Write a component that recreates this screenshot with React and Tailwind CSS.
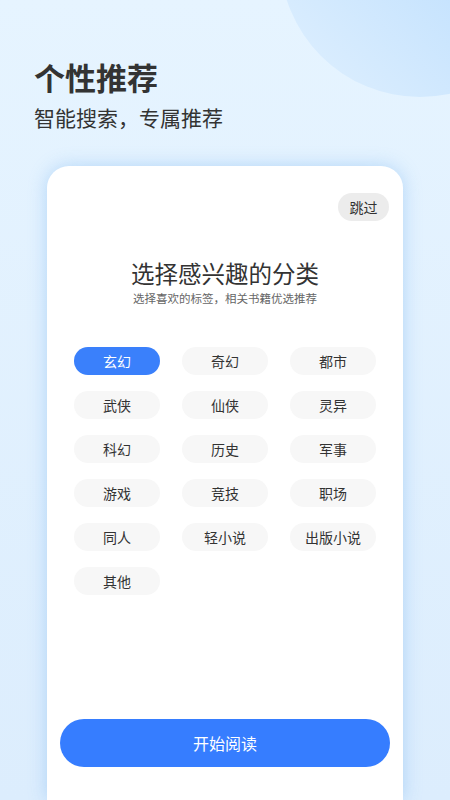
import React, { useState } from 'react';

// Interest picker onboarding screen
const CATEGORIES = [
  '玄幻', '奇幻', '都市',
  '武侠', '仙侠', '灵异',
  '科幻', '历史', '军事',
  '游戏', '竞技', '职场',
  '同人', '轻小说', '出版小说',
  '其他',
];

const FONT = "font-['Noto_Sans_CJK_SC','Noto_Sans',sans-serif]";

function Chip({ label, active, onClick }) {
  return (
    <button
      onClick={onClick}
      className={
        active
          ? 'h-[28px] rounded-full bg-[#3a80fb] text-white text-[14px] leading-[28px]'
          : 'h-[28px] rounded-full bg-[#f7f7f7] text-[#333333] text-[14px] leading-[28px]'
      }
    >
      {label}
    </button>
  );
}

export default function App() {
  const [selected, setSelected] = useState(['玄幻']);

  const toggle = (name) => {
    setSelected((prev) =>
      prev.includes(name) ? prev.filter((n) => n !== name) : [...prev, name]
    );
  };

  return (
    <div className={`relative w-[450px] h-[800px] overflow-hidden bg-gradient-to-b from-[#e6f4ff] to-[#dcedfd] flex flex-col ${FONT}`}>
      {/* decorative circle top-right */}
      <div className="absolute left-[280px] top-[-183px] w-[280px] h-[280px] rounded-full bg-gradient-to-tr from-[#e0f0fe] to-[#acd6fd]" />

      {/* header */}
      <div className="relative px-[34px] pt-[61px]">
        <h1 className="text-[31px] leading-[31px] font-bold text-[#333333]">个性推荐</h1>
        <p className="mt-[14px] text-[21px] leading-[22px] text-[#333333]">智能搜索，专属推荐</p>
      </div>

      {/* card */}
      <div className="relative mt-[38px] mx-[47px] flex-1 bg-white rounded-t-[22px] shadow-[0_0_18px_rgba(120,180,240,0.45)] flex flex-col">
        <div className="flex justify-end pt-[27px] pr-[14px]">
          <button className="h-[28px] w-[51px] rounded-full bg-[#ececec] text-[14px] leading-[28px] text-[#333333]">
            跳过
          </button>
        </div>

        <h2 className="mt-[40px] text-center text-[23.5px] leading-[24px] text-[#333333]">选择感兴趣的分类</h2>
        <p className="mt-[7px] text-center text-[11.5px] leading-[12px] text-[#666666]">选择喜欢的标签，相关书籍优选推荐</p>

        <div className="mt-[43px] px-[27px] grid grid-cols-3 gap-x-[22px] gap-y-[16px]">
          {CATEGORIES.map((c) => (
            <Chip key={c} label={c} active={selected.includes(c)} onClick={() => toggle(c)} />
          ))}
        </div>

        <div className="flex-1" />

        <div className="px-[13px] pb-[33px]">
          <button className="w-full h-[48px] rounded-full bg-[#367dff] text-white text-[16px]">
            开始阅读
          </button>
        </div>
      </div>
    </div>
  );
}
